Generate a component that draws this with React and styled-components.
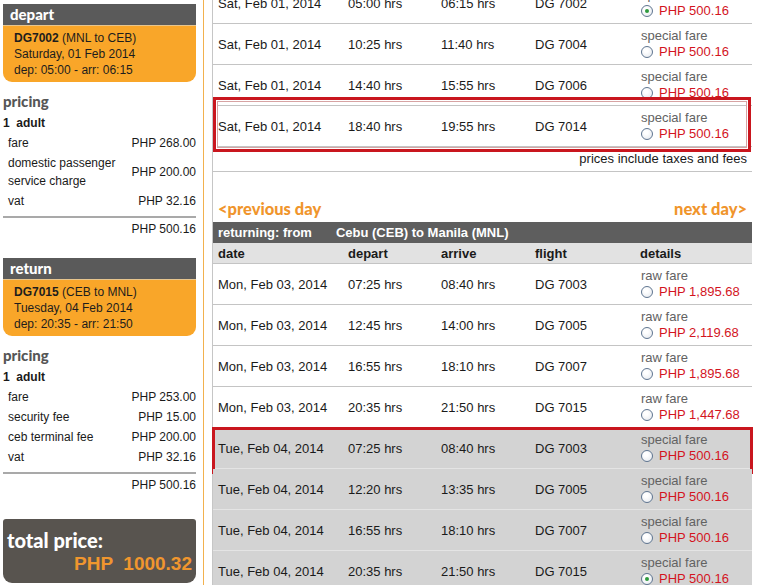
import React from 'react';
import styled, { createGlobalStyle } from 'styled-components';

const GlobalStyle = createGlobalStyle`
  html, body {
    margin: 0;
    padding: 0;
    background: #fff;
    overflow: hidden;
  }
  body {
    font-family: "Liberation Sans", Arial, sans-serif;
    color: #1a1a1a;
  }
`;

const departFares = [
    { date: 'Sat, Feb 01, 2014', dep: '05:00 hrs', arr: '06:15 hrs', flight: 'DG 7002', kind: 'special fare', price: 'PHP 500.16', checked: true },
    { date: 'Sat, Feb 01, 2014', dep: '10:25 hrs', arr: '11:40 hrs', flight: 'DG 7004', kind: 'special fare', price: 'PHP 500.16' },
    { date: 'Sat, Feb 01, 2014', dep: '14:40 hrs', arr: '15:55 hrs', flight: 'DG 7006', kind: 'special fare', price: 'PHP 500.16' },
    { date: 'Sat, Feb 01, 2014', dep: '18:40 hrs', arr: '19:55 hrs', flight: 'DG 7014', kind: 'special fare', price: 'PHP 500.16', mark: 'top' },
];

const returnFares = [
    { date: 'Mon, Feb 03, 2014', dep: '07:25 hrs', arr: '08:40 hrs', flight: 'DG 7003', kind: 'raw fare', price: 'PHP 1,895.68' },
    { date: 'Mon, Feb 03, 2014', dep: '12:45 hrs', arr: '14:00 hrs', flight: 'DG 7005', kind: 'raw fare', price: 'PHP 2,119.68' },
    { date: 'Mon, Feb 03, 2014', dep: '16:55 hrs', arr: '18:10 hrs', flight: 'DG 7007', kind: 'raw fare', price: 'PHP 1,895.68' },
    { date: 'Mon, Feb 03, 2014', dep: '20:35 hrs', arr: '21:50 hrs', flight: 'DG 7015', kind: 'raw fare', price: 'PHP 1,447.68' },
    { date: 'Tue, Feb 04, 2014', dep: '07:25 hrs', arr: '08:40 hrs', flight: 'DG 7003', kind: 'special fare', price: 'PHP 500.16', shaded: true, mark: 'bottom' },
    { date: 'Tue, Feb 04, 2014', dep: '12:20 hrs', arr: '13:35 hrs', flight: 'DG 7005', kind: 'special fare', price: 'PHP 500.16', shaded: true },
    { date: 'Tue, Feb 04, 2014', dep: '16:55 hrs', arr: '18:10 hrs', flight: 'DG 7007', kind: 'special fare', price: 'PHP 500.16', shaded: true },
    { date: 'Tue, Feb 04, 2014', dep: '20:35 hrs', arr: '21:50 hrs', flight: 'DG 7015', kind: 'special fare', price: 'PHP 500.16', shaded: true, checked: true },
];

const trips = [
    {
        title: 'depart',
        code: 'DG7002',
        route: '(MNL to CEB)',
        day: 'Saturday, 01 Feb 2014',
        times: 'dep: 05:00 - arr: 06:15',
        fees: [
            { label: 'fare', amount: 'PHP 268.00' },
            { label: 'domestic passenger service charge', amount: 'PHP 200.00' },
            { label: 'vat', amount: 'PHP 32.16' },
        ],
        total: 'PHP 500.16',
    },
    {
        title: 'return',
        code: 'DG7015',
        route: '(CEB to MNL)',
        day: 'Tuesday, 04 Feb 2014',
        times: 'dep: 20:35 - arr: 21:50',
        fees: [
            { label: 'fare', amount: 'PHP 253.00' },
            { label: 'security fee', amount: 'PHP 15.00' },
            { label: 'ceb terminal fee', amount: 'PHP 200.00' },
            { label: 'vat', amount: 'PHP 32.16' },
        ],
        total: 'PHP 500.16',
    },
];

const FareRow = ({ fare }) => (
    <Row $shaded={fare.shaded}>
        <Cell>{fare.date}</Cell>
        <Cell>{fare.dep}</Cell>
        <Cell>{fare.arr}</Cell>
        <Cell>{fare.flight}</Cell>
        <Details>
            <FareKind>{fare.kind}</FareKind>
            <PriceLine>
                <Radio $checked={fare.checked} />
                <Price>{fare.price}</Price>
            </PriceLine>
        </Details>
        {fare.mark && <Highlight $variant={fare.mark} />}
    </Row>
);

const TripSummary = ({ trip }) => (
    <Trip>
        <TripHeader>{trip.title}</TripHeader>
        <FlightBox>
            <div><b>{trip.code}</b> {trip.route}</div>
            <div>{trip.day}</div>
            <div>{trip.times}</div>
        </FlightBox>
        <PricingTitle>pricing</PricingTitle>
        <Passenger>1&nbsp; adult</Passenger>
        {trip.fees.map((fee) => (
            <FeeRow key={fee.label}>
                <FeeLabel>{fee.label}</FeeLabel>
                <span>{fee.amount}</span>
            </FeeRow>
        ))}
        <Rule />
        <Subtotal>{trip.total}</Subtotal>
    </Trip>
);

const App = () => {
    return (
        <>
            <GlobalStyle />
            <Page>
                <Sidebar>
                    {trips.map((trip) => (
                        <TripSummary key={trip.title} trip={trip} />
                    ))}
                    <TotalBox>
                        <TotalLabel>total price:</TotalLabel>
                        <TotalAmount>PHP  1000.32</TotalAmount>
                    </TotalBox>
                </Sidebar>
                <Main>
                    <TopTable>
                        {departFares.map((fare, i) => (
                            <FareRow key={i} fare={fare} />
                        ))}
                    </TopTable>
                    <Note>prices include taxes and fees</Note>
                    <DayNav>
                        <span>&lt;previous day</span>
                        <span>next day&gt;</span>
                    </DayNav>
                    <RouteBar>
                        <span>returning: from</span>
                        <RouteName>Cebu (CEB) to Manila (MNL)</RouteName>
                    </RouteBar>
                    <HeadRow>
                        <Cell>date</Cell>
                        <Cell>depart</Cell>
                        <Cell>arrive</Cell>
                        <Cell>flight</Cell>
                        <Cell>details</Cell>
                    </HeadRow>
                    {returnFares.map((fare, i) => (
                        <FareRow key={i} fare={fare} />
                    ))}
                </Main>
            </Page>
        </>
    );
};

const Page = styled.div`
    display: flex;
    align-items: flex-start;
    width: 757px;
    height: 585px;
    overflow: hidden;
`;

const Sidebar = styled.aside`
    flex: 0 0 auto;
    width: 193px;
    min-height: 585px;
    padding: 4px 7px 0 3px;
    border-right: 1px solid #f2b14e;
    font-size: 12px;
`;

const Trip = styled.section`
    margin-bottom: 20px;

    &:last-of-type {
        margin-bottom: 25px;
    }
`;

const TripHeader = styled.div`
    height: 21px;
    line-height: 21px;
    padding-left: 7px;
    background: #5a5a5a;
    color: #fff;
    font-family: Lato, "Open Sans", sans-serif;
    font-weight: 900;
    font-size: 15px;
`;

const FlightBox = styled.div`
    padding: 4px 11px;
    background: #f9a629;
    border-top: 1px solid #e7c58e;
    border-radius: 0 0 9px 9px;
    line-height: 16px;
    color: #1d1d1d;
`;

const PricingTitle = styled.div`
    margin-top: 9px;
    line-height: 20px;
    font-family: Lato, "Open Sans", sans-serif;
    font-weight: 900;
    font-size: 15px;
    color: #565656;
`;

const Passenger = styled.div`
    margin-top: 2px;
    line-height: 20px;
    font-weight: bold;
`;

const FeeRow = styled.div`
    display: flex;
    align-items: center;
    justify-content: space-between;
    padding: 1px 0 1px 5px;
    line-height: 18px;
`;

const FeeLabel = styled.span`
    max-width: 118px;
`;

const Rule = styled.div`
    margin-top: 5px;
    height: 2px;
    background: #a9a9a9;
`;

const Subtotal = styled.div`
    margin-top: 2px;
    line-height: 18px;
    text-align: right;
`;

const TotalBox = styled.div`
    padding: 9px 4px 7px 4px;
    background: #58544f;
    border-radius: 3px 3px 9px 9px;
`;

const TotalLabel = styled.div`
    line-height: 24px;
    font-family: Lato, "Open Sans", sans-serif;
    font-weight: 900;
    font-size: 20px;
    color: #fff;
`;

const TotalAmount = styled.div`
    line-height: 24px;
    text-align: right;
    white-space: pre;
    font-weight: bold;
    font-size: 19px;
    color: #f0962e;
`;

const Main = styled.main`
    flex: 0 0 auto;
    width: 539px;
    min-height: 620px;
    margin-left: 8px;
    padding-right: 5px;
    border-left: 1px solid #c6c6c6;
    font-size: 13px;
`;

const TopTable = styled.div`
    margin-top: -17px;
`;

const columns = `
    display: grid;
    grid-template-columns: 130px 93px 94px 105px 1fr;
    align-items: center;
`;

const Row = styled.div`
    ${columns}
    position: relative;
    height: 40px;
    border-bottom: 1px solid ${(p) => (p.$shaded ? '#e4e4e4' : '#c4c4c4')};
    background: ${(p) => (p.$shaded ? '#d3d3d3' : '#fff')};
`;

const Cell = styled.div`
    padding-left: 5px;
    white-space: nowrap;
`;

const Details = styled.div`
    padding-left: 6px;
    line-height: 16px;
`;

const FareKind = styled.div`
    color: #626262;
`;

const PriceLine = styled.div`
    display: flex;
    align-items: center;
    gap: 6px;
`;

const Radio = styled.span`
    position: relative;
    flex: 0 0 auto;
    width: 10px;
    height: 10px;
    border: 1px solid #5f7590;
    border-radius: 50%;
    background: radial-gradient(circle at 40% 35%, #ffffff 20%, #e2e6ec 100%);

    &::after {
        content: '';
        display: ${(p) => (p.$checked ? 'block' : 'none')};
        position: absolute;
        left: 3px;
        top: 3px;
        width: 4px;
        height: 4px;
        border-radius: 50%;
        background: #2f9a3e;
    }
`;

const Price = styled.span`
    color: #d3141e;
`;

const Highlight = styled.div`
    position: absolute;
    pointer-events: none;
    border: 3px solid #c9161e;
    top: ${(p) => (p.$variant === 'top' ? '-9px' : '-1px')};
    bottom: -6px;
    left: ${(p) => (p.$variant === 'top' ? '0' : '-1px')};
    right: ${(p) => (p.$variant === 'top' ? '1px' : '-1px')};
    box-shadow: ${(p) => (p.$variant === 'top' ? 'inset 0 0 0 1px #fff, inset 0 0 0 2px #d7a3a3' : 'none')};
`;

const Note = styled.div`
    height: 24px;
    line-height: 24px;
    padding-right: 5px;
    text-align: right;
    border-bottom: 1px solid #c4c4c4;
`;

const DayNav = styled.div`
    display: flex;
    justify-content: space-between;
    padding: 27px 5px 3px 5px;
    line-height: 20px;
    font-family: Lato, "Open Sans", sans-serif;
    font-weight: 900;
    font-size: 16.5px;
    color: #f0952c;
`;

const RouteBar = styled.div`
    display: flex;
    height: 21px;
    line-height: 21px;
    padding-left: 5px;
    background: #5e5e5e;
    color: #fff;
    font-weight: bold;
`;

const RouteName = styled.span`
    margin-left: 24px;
`;

const HeadRow = styled.div`
    ${columns}
    height: 20px;
    background: #e2e2e2;
    border-bottom: 1px solid #c4c4c4;
    font-weight: bold;
`;

export default App;
